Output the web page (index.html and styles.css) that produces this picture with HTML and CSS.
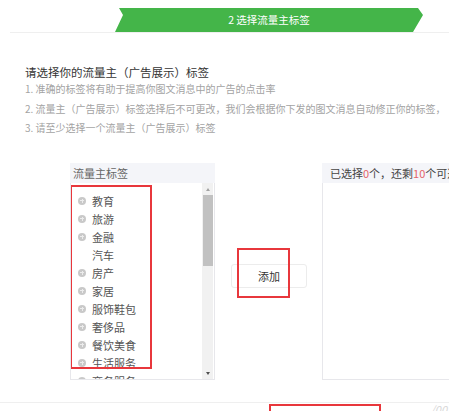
FILE: index.html
```html
<!DOCTYPE html>
<html>
<head>
    <meta charset="utf-8">
    <link rel="stylesheet" href="styles.css">
</head>
<body>
<div class="steps">
    <div class="step-current">2 选择流量主标签</div>
</div>

<div class="intro">
    <h2 class="intro-title">请选择你的流量主（广告展示）标签</h2>
    <p class="intro-line">1. 准确的标签将有助于提高你图文消息中的广告的点击率</p>
    <p class="intro-line">2. 流量主（广告展示）标签选择后不可更改，我们会根据你下发的图文消息自动修正你的标签，</p>
    <p class="intro-line">3. 请至少选择一个流量主（广告展示）标签</p>
</div>

<div class="transfer">
    <div class="panel panel-source">
        <div class="panel-header">流量主标签</div>
        <div class="panel-body">
            <ul class="tag-list">
                <li class="tag-item"><span class="tag-icon"></span>教育</li>
                <li class="tag-item"><span class="tag-icon"></span>旅游</li>
                <li class="tag-item"><span class="tag-icon"></span>金融</li>
                <li class="tag-item"><span class="tag-icon tag-icon-none"></span>汽车</li>
                <li class="tag-item"><span class="tag-icon"></span>房产</li>
                <li class="tag-item"><span class="tag-icon"></span>家居</li>
                <li class="tag-item"><span class="tag-icon"></span>服饰鞋包</li>
                <li class="tag-item"><span class="tag-icon"></span>奢侈品</li>
                <li class="tag-item"><span class="tag-icon"></span>餐饮美食</li>
                <li class="tag-item"><span class="tag-icon"></span>生活服务</li>
                <li class="tag-item"><span class="tag-icon"></span>商务服务</li>
            </ul>
            <div class="scrollbar">
                <span class="scroll-arrow scroll-up"></span>
                <span class="scroll-thumb"></span>
                <span class="scroll-arrow scroll-down"></span>
            </div>
            <div class="mark mark-list"></div>
        </div>
    </div>

    <div class="transfer-action">
        <button class="add-btn">添加</button>
        <div class="mark mark-btn"></div>
    </div>

    <div class="panel panel-target">
        <div class="panel-header panel-header-target">已选择<em>0</em>个，还剩<em>10</em>个可选</div>
        <div class="panel-body panel-body-target"></div>
    </div>
</div>

<div class="footer">
    <div class="footer-btn"></div>
    <span class="footer-note">/00</span>
</div>
</body>
</html>
```

FILE: styles.css
```css
* {
    margin: 0;
    padding: 0;
    box-sizing: border-box;
}

body {
    width: 449px;
    height: 411px;
    overflow: hidden;
    background: white;
    font-family: "Noto Sans CJK SC", "Noto Sans", sans-serif;
    color: #333;
}

/* Step bar */
.steps {
    margin-left: 10px;
    padding-top: 8px;
    height: 33px;
    border-bottom: 1px solid #efefef;
}

.step-current {
    margin-left: 105px;
    width: 308px;
    height: 24px;
    line-height: 23px;
    background: #44b549;
    color: white;
    font-size: 10.5px;
    text-align: center;
    clip-path: polygon(4px 0, 303px 0, 308px 7px, 298px 24px, 0 24px, 8px 7px);
}

/* Intro text */
.intro {
    padding-left: 25px;
    margin-top: 32px;
}

.intro-title {
    font-size: 11.5px;
    font-weight: normal;
    line-height: 14px;
    color: #333;
}

.intro-line {
    font-size: 10px;
    line-height: 19.5px;
    color: #a3a3a3;
    white-space: nowrap;
}

/* Transfer box */
.transfer {
    display: flex;
    align-items: flex-start;
    margin-top: 25px;
    height: 219px;
}

.panel {
    flex-shrink: 0;
}

.panel-source {
    margin-left: 70px;
    width: 145px;
}

.panel-header {
    height: 20px;
    line-height: 20px;
    padding-left: 3px;
    font-size: 11px;
    color: #666;
    background: #f4f5f9;
}

.panel-body {
    position: relative;
    display: flex;
    height: 197px;
    border: 1px solid #e7e7eb;
    border-top: none;
    overflow: hidden;
}

.tag-list {
    list-style: none;
    flex-grow: 1;
    padding-top: 9px;
    padding-left: 7px;
}

.tag-item {
    display: flex;
    align-items: center;
    height: 18px;
    font-size: 11px;
    color: #555;
}

.tag-icon {
    position: relative;
    width: 8px;
    height: 8px;
    margin-right: 6px;
    border-radius: 50%;
    background: #c9c9c9;
    flex-shrink: 0;
}

.tag-icon:before,
.tag-icon:after {
    content: "";
    position: absolute;
    background: #ececec;
}

.tag-icon:before {
    left: 2px;
    top: 3.5px;
    width: 4px;
    height: 1px;
}

.tag-icon:after {
    left: 3.5px;
    top: 2px;
    width: 1px;
    height: 4px;
}

.tag-icon-none {
    background: none;
}

.tag-icon-none:before,
.tag-icon-none:after {
    display: none;
}

/* Fake scrollbar */
.scrollbar {
    display: flex;
    flex-direction: column;
    align-items: center;
    width: 11px;
    margin-right: 1px;
    background: #f1f1f1;
    flex-shrink: 0;
}

.scroll-arrow {
    width: 0;
    height: 0;
    border-left: 2.5px solid transparent;
    border-right: 2.5px solid transparent;
}

.scroll-up {
    margin-top: 5px;
    border-bottom: 3px solid #a3a3a3;
}

.scroll-thumb {
    width: 10px;
    height: 71px;
    margin-top: 4px;
    background: #c1c1c1;
}

.scroll-down {
    margin-top: auto;
    margin-bottom: 4px;
    border-top: 3px solid #505050;
}

/* Middle action */
.transfer-action {
    position: relative;
    flex-shrink: 0;
    margin-left: 16px;
    padding-top: 101px;
}

.add-btn {
    display: block;
    width: 76px;
    height: 24px;
    border: 1px solid #ececec;
    border-radius: 3px;
    background: white;
    font-family: "Noto Sans CJK SC", "Noto Sans", sans-serif;
    font-size: 11px;
    color: #333;
}

.panel-target {
    margin-left: 15px;
    width: 200px;
}

.panel-header-target {
    padding-left: 8px;
    color: #444;
    white-space: nowrap;
}

.panel-header-target em {
    font-style: normal;
    color: #e4636a;
}

.panel-body-target {
    height: 197px;
    border-right: none;
}

/* Red annotation boxes */
.mark {
    position: absolute;
    border: 2px solid #e8373c;
}

.mark-list {
    left: -1px;
    top: 2px;
    width: 82px;
    height: 184px;
}

.mark-btn {
    left: 6px;
    top: 85px;
    width: 53px;
    height: 50px;
}

/* Footer */
.footer {
    position: relative;
    margin-top: 20px;
    border-top: 1px solid #efefef;
    padding-top: 1px;
}

.footer-btn {
    margin-left: 269px;
    width: 112px;
    height: 20px;
    border: 2px solid #e8373c;
}

.footer-note {
    position: absolute;
    right: 2px;
    top: -2px;
    font-size: 11px;
    font-style: italic;
    color: #d8d8d8;
}
```
